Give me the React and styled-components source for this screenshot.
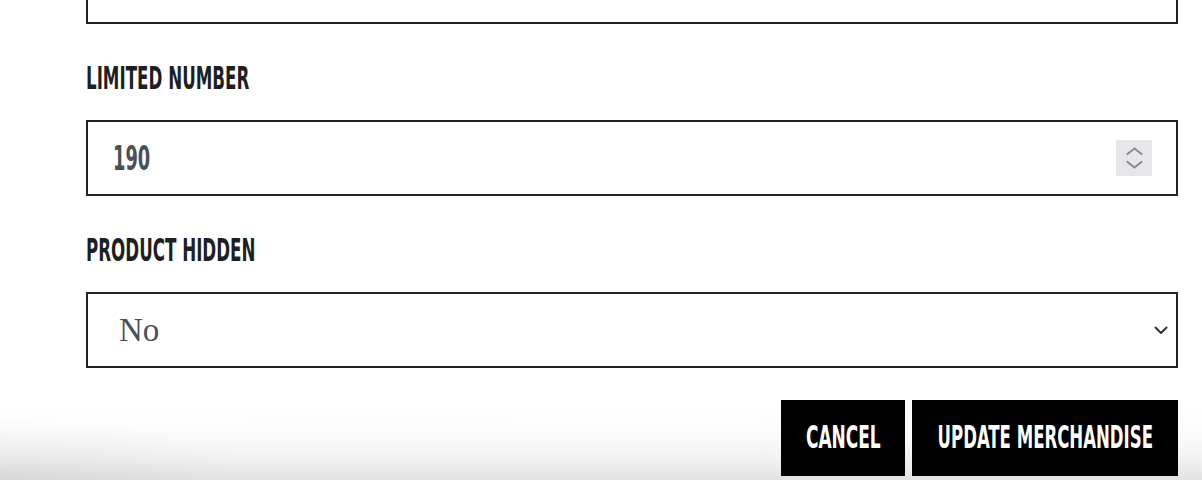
import React from "react";
import styled, { createGlobalStyle } from "styled-components";

const GlobalStyle = createGlobalStyle`
  html, body {
    margin: 0;
    padding: 0;
    background: #fff;
  }
  body {
    width: 1202px;
    height: 480px;
    overflow: hidden;
  }
`;

const condensed = `"DejaVu Sans Condensed", "DejaVu Sans", "Liberation Sans", sans-serif`;

const Page = styled.div`
  width: 1202px;
  height: 480px;
  overflow: hidden;
  display: flex;
  flex-direction: column;
`;

const Form = styled.div`
  margin-top: -52px;
  padding: 0 24px 0 86px;
  display: flex;
  flex-direction: column;
`;

const Group = styled.div`
  display: flex;
  flex-direction: column;
  margin-top: ${(p) => (p.$first ? 0 : 38)}px;
`;

const Label = styled.label`
  display: block;
  height: 32px;
  line-height: 32px;
  margin-bottom: 26px;
  font-family: ${condensed};
  font-weight: 700;
  font-size: 32px;
  color: #1d1f23;
  text-transform: uppercase;
  white-space: nowrap;
`;

const Squeeze = styled.span`
  display: inline-block;
  transform: scaleX(${(p) => p.$x});
  transform-origin: ${(p) => p.$origin || "left"} center;
`;

const Box = styled.div`
  box-sizing: border-box;
  height: 76px;
  border: 2px solid #222;
  background: #fff;
  display: flex;
  align-items: center;
  padding: ${(p) => p.$pad || "0 24px 0 25px"};
`;

const ValueInput = styled.input`
  flex: 1;
  min-width: 0;
  border: 0;
  outline: 0;
  padding: 0;
  background: transparent;
  font-family: ${condensed};
  font-weight: 700;
  font-size: 33px;
  color: #4a4f58;
  transform: scaleX(0.6);
  transform-origin: left center;
`;

const Spinner = styled.div`
  width: 36px;
  height: 36px;
  background: #e6e6eb;
  flex-shrink: 0;
`;

const Select = styled.select`
  flex: 1;
  min-width: 0;
  height: 100%;
  appearance: none;
  -webkit-appearance: none;
  border: 0;
  outline: 0;
  background: transparent;
  padding: 0 0 0 31px;
  font-family: "Liberation Serif", "Times New Roman", serif;
  font-size: 33px;
  color: #4a4f58;
`;

const Footer = styled.div`
  flex: 1;
  margin-top: 32px;
  padding-right: 24px;
  display: flex;
  justify-content: flex-end;
  align-items: flex-start;
  gap: 7px;
  background:
    radial-gradient(ellipse 260px 60px at 0 100%, rgba(0, 0, 0, 0.06), rgba(0, 0, 0, 0) 100%),
    linear-gradient(to bottom, #fff 0%, #fff 12%, #f9f9f9 50%, #f1f1f1 75%, #e3e3e3 100%);
`;

const Button = styled.button`
  box-sizing: border-box;
  width: ${(p) => p.$w}px;
  height: 76px;
  border: 0;
  padding: 0 0 2px;
  background: #000;
  color: #fff;
  font-family: ${condensed};
  font-weight: 700;
  font-size: 32px;
  text-transform: uppercase;
  white-space: nowrap;
  display: flex;
  align-items: center;
  justify-content: center;
  cursor: pointer;
`;

const SpinIcon = () => (
  <svg width="36" height="36" viewBox="0 0 36 36" fill="none" stroke="#8d8d96" strokeWidth="2.2" strokeLinecap="round" strokeLinejoin="round">
    <path d="M11.5 14 L18.5 8.5 L25.5 14" />
    <path d="M11.5 22 L18.5 27.5 L25.5 22" />
  </svg>
);

const Chevron = () => (
  <svg width="14" height="9" viewBox="0 0 14 9" fill="none" stroke="#333" strokeWidth="2" strokeLinecap="round" strokeLinejoin="round">
    <path d="M1.5 1.5 L7 7 L12.5 1.5" />
  </svg>
);

export default function App() {
  return (
    <Page>
      <GlobalStyle />
      <Form>
        <Group $first>
          <Box />
        </Group>
        <Group>
          <Label>
            <Squeeze $x={0.58}>Limited Number</Squeeze>
          </Label>
          <Box>
            <ValueInput type="text" defaultValue="190" />
            <Spinner>
              <SpinIcon />
            </Spinner>
          </Box>
        </Group>
        <Group>
          <Label>
            <Squeeze $x={0.58}>Product Hidden</Squeeze>
          </Label>
          <Box $pad="0 8px 0 0">
            <Select defaultValue="no">
              <option value="no">No</option>
              <option value="yes">Yes</option>
            </Select>
            <Chevron />
          </Box>
        </Group>
      </Form>
      <Footer>
        <Button $w={124}>
          <Squeeze $x={0.59} $origin="center">Cancel</Squeeze>
        </Button>
        <Button $w={266}>
          <Squeeze $x={0.575} $origin="center">Update Merchandise</Squeeze>
        </Button>
      </Footer>
    </Page>
  );
}
